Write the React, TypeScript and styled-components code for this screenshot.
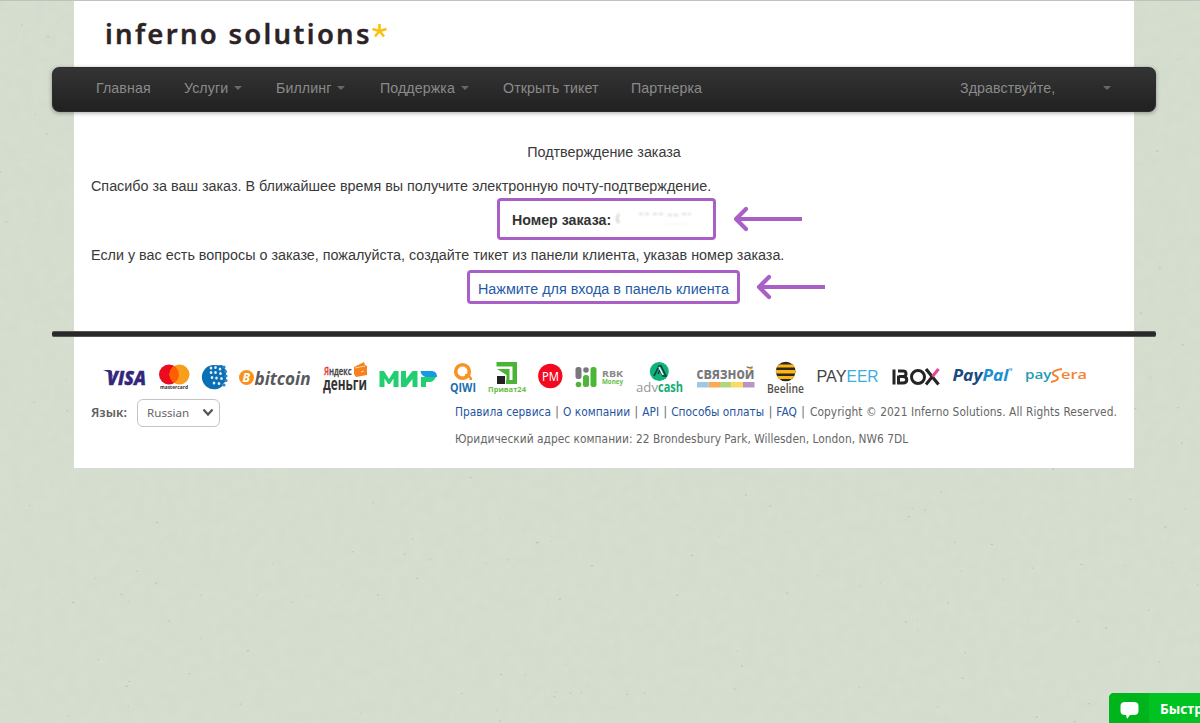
import React from 'react';
import styled, { createGlobalStyle } from 'styled-components';

const Global = createGlobalStyle`
  * { box-sizing: border-box; }
  html, body { margin: 0; height: 100%; overflow: hidden; }
  body { background: #d6ded0; font-family: 'Liberation Sans', Arial, sans-serif; color: #3a3a3a; }
`;

const Screen = styled.div`
  position: relative;
  height: 723px;
  overflow: hidden;
  border-top: 1px solid #bfc2be;
`;

const Texture = styled.svg`
  position: absolute;
  inset: 0;
  width: 1200px;
  height: 723px;
`;

const Page = styled.div`
  position: relative;
  width: 1060px;
  height: 467px;
  margin-left: 74px;
  background: #fff;
  display: flex;
  flex-direction: column;
`;

const Header = styled.header`
  height: 66px;
  padding-left: 30px;
`;

const Navbar = styled.nav`
  height: 45px;
  margin: 0 -22px;
  padding: 0 44px 3px 43px;
  display: flex;
  align-items: center;
  border-radius: 7px;
  border: 1px solid #2c2c2c;
  background: linear-gradient(#343434, #212121);
  box-shadow: 0 1px 4px rgba(0, 0, 0, 0.35);
  color: #8a8a8a;
`;

const NavItem = styled.a<{ $w: number }>`
  display: flex;
  align-items: center;
  flex: none;
  width: ${p => p.$w}px;
  font-size: 14.2px;
  letter-spacing: 0.1px;
  white-space: nowrap;
`;

const Greeting = styled(NavItem)`
  margin-left: auto;
  justify-content: space-between;
`;

const Caret = styled.i`
  margin-left: 6px;
  border: 4px solid transparent;
  border-top-color: #686868;
  border-bottom: 0;
`;

const Content = styled.main`
  height: 218px;
  padding: 23px 17px 0;
  font-size: 14.35px;
  line-height: 34.2px;
`;

const Line = styled.p<{ $center?: boolean }>`
  margin: 0;
  height: 34.2px;
  display: flex;
  justify-content: ${p => (p.$center ? 'center' : 'flex-start')};
  white-space: nowrap;
`;

const Marked = styled.div<{ $w: number; $h: number; $left: number; $pad: number }>`
  flex: none;
  width: ${p => p.$w}px;
  height: ${p => p.$h}px;
  margin-left: ${p => p.$left}px;
  padding-left: ${p => p.$pad}px;
  border: 3px solid #a95fc5;
  border-radius: 4px;
  display: flex;
  align-items: center;
`;

const MarkRow = styled.div<{ $gap: number; $shift: number }>`
  height: 34.2px;
  display: flex;
  align-items: center;
  gap: ${p => p.$gap}px;

  & > * { margin-top: ${p => p.$shift}px; }
`;

const PanelLink = styled.a`
  padding-top: 4px;
  color: #1f5aa6;
  white-space: nowrap;
`;

const OrderLabel = styled.b`
  padding-top: 2px;
  font-size: 14.2px;
  color: #333;
  white-space: nowrap;
`;

const Smudge = styled.svg`
  filter: blur(1px);
`;

const Arrow = styled.svg`
  flex: none;
`;

const Divider = styled.div`
  height: 6px;
  flex: none;
  margin: 1px -22px 0;
  background: #292929;
  border: solid #555;
  border-width: 1px 0;
  border-radius: 2px;
`;

const Payments = styled.div`
  display: flex;
  margin: 20px 0 0 26px;
  height: 40px;
`;

const Logo = styled.svg<{ $gap: number }>`
  flex: none;
  overflow: visible;
  margin-left: ${p => p.$gap}px;
`;

const Footer = styled.footer`
  display: flex;
  padding-left: 17px;
  color: #666;
  font-family: 'DejaVu Sans Condensed', 'DejaVu Sans', sans-serif;
  font-stretch: condensed;
  font-size: 11.8px;
`;

const Language = styled.div`
  width: 364px;
  display: flex;
  align-items: center;
  height: 27px;
  margin-top: 2px;
  gap: 9px;
`;

const LangLabel = styled.b`
  width: 37px;
  font-family: 'Noto Sans', sans-serif;
  font-size: 12.6px;
  font-weight: 600;
  color: #606060;
`;

const Select = styled.div`
  width: 83px;
  height: 28px;
  padding: 0 5px 0 9px;
  border: 1px solid #c4c4c4;
  border-radius: 6px;
  display: flex;
  align-items: center;
  justify-content: space-between;
  font-family: 'Noto Sans', sans-serif;
  font-size: 11.6px;
`;

const Legal = styled.div`
  line-height: 26.6px;
  white-space: nowrap;
  margin-top: 2px;
`;

const LegalRow = styled.div`
  letter-spacing: 0.04px;
`;

const LegalLink = styled.a`
  margin-right: 1px;
  letter-spacing: 0.02px;
  color: #1f55a0;

  &:not(:first-child) { margin-left: 0.7px; }
`;

const Copyright = styled.span`
  margin-left: 1.6px;
  letter-spacing: 0.09px;
`;

const Chat = styled.div`
  position: absolute;
  right: 0;
  bottom: 0;
  width: 91px;
  height: 30px;
  display: flex;
  overflow: hidden;
  border-radius: 5px 0 0 0;
  background: #00c322;
  color: #fff;
  font: bold 13.5px/32px 'Noto Sans', sans-serif;
  white-space: nowrap;
`;

const ChatIcon = styled.div`
  flex: none;
  width: 40px;
  margin-right: 11px;
  padding: 9px 0 0 11px;
  background: #00b41c;
  line-height: 0;
`;

const specks: [number, number, number][] = [];
let seed = 17;
const rnd = () => (seed = (seed * 16807) % 2147483647) / 2147483647;
for (let i = 0; i < 330; i++) specks.push([rnd() * 1200, rnd() * 723, rnd()]);

type LogoTextProps = {
  x: number; y: number; w: number; size: number; fill: string; children: React.ReactNode;
  weight?: number; italic?: boolean; font?: string; spaced?: boolean; bolder?: number;
};
const T = ({ x, y, w, size, fill, children, weight = 700, italic, font = 'Open Sans', spaced, bolder = 0 }: LogoTextProps) => (
  <text x={x} y={y} textLength={w} lengthAdjust={spaced ? 'spacing' : 'spacingAndGlyphs'} fontSize={size} fill={fill}
    stroke={bolder ? fill : 'none'} strokeWidth={bolder}
    fontWeight={weight} fontStyle={italic ? 'italic' : 'normal'} fontFamily={`'${font}', sans-serif`}>{children}</text>
);

const logos: { x: number; w: number; art: React.ReactNode }[] = [
  { x: 103, w: 43, art: <><T x={107} y={384.500} w={39} size={19.500} fill="#34267c" weight={800} italic bolder={0.4}>VISA</T><path d="M103 370h7.500l3 8c-2-4-5-6-10.500-8z" fill="#34267c" /></> },
  { x: 159, w: 31, art: <><circle cx="169" cy="374.500" r="10" fill="#eb0a1e" /><circle cx="179.500" cy="374.500" r="10" fill="#f99d1c" /><path d="M174.250 366a10 10 0 0 1 0 17a10 10 0 0 1 0-17z" fill="#ff5f00" /><T x={160} y={389} w={28} size={5.500} fill="#333">mastercard</T></> },
  { x: 202, w: 25, art: <><path d="M220 366.500a12.200 12.200 0 1 0 3 19l-2-3 1-12z" fill="#0b6fb5" /><path d="M211 366l11-1 4 5v11l-5 5-8-2-3-7z" fill="#0b6fb5" />
    {[[211, 368], [215.500, 367.500], [220, 369], [211, 372.500], [215.500, 372.500], [220.500, 373.500], [212, 377.500], [216.500, 378], [221.500, 378.500], [214, 383], [219, 383.500]].map(([a, b], i) => <ellipse key={i} cx={a} cy={b} rx="1.300" ry="1.500" fill="#e4f0f8" />)}
    {[[224, 367], [225.500, 371.500], [226, 376], [226, 380.500], [224, 385]].map(([a, b]) => <circle key={b} cx={a} cy={b} r="1.600" fill="#2f86c3" />)}</> },
  { x: 239, w: 72, art: <><circle cx="246.500" cy="377.500" r="7.500" fill="#f7931a" /><T x={242.500} y={382} w={7.500} size={12} fill="#fff" italic>B</T><T x={254.500} y={384.500} w={56} size={18.500} fill="#58595b" italic>bitcoin</T></> },
  { x: 323, w: 45, art: <><T x={324} y={375} w={27.500} size={10.500} fill="#444" weight={600} bolder={0.3}><tspan fill="#e33" stroke="#e33">Я</tspan>ндекс</T><T x={323} y={390} w={44} size={17.500} fill="#333">деньги</T><path d="M354 367l10-5 1 3 2 1v9l-11 2-2-3z" fill="#f58220" /><path d="M355 368l10-2M361 372l3-1" stroke="#ffd0a0" strokeWidth="1" /></> },
  { x: 379, w: 58, art: <><path d="M379.500 387v-16h4.500l5 8 5-8h4.500v16h-5v-8.500l-3.500 5.500h-2l-3.500-5.500V387zM401 387v-16h5v8l6.500-8h5v16h-5v-8l-6.500 8zM421 387v-10h15c-2 4-4 5-7 5h-3v5z" fill="#22cf70" /><path d="M420.500 371h10.500c4 0 6 2 6 6h-10c-3 0-6-2-6.500-6z" fill="#149be4" /></> },
  { x: 450, w: 26, art: <><circle cx="462.500" cy="371.500" r="6.800" fill="none" stroke="#f79320" strokeWidth="3.600" /><path d="M465 375q6 1 6 5" fill="none" stroke="#f79320" strokeWidth="2.500" /><T x={450} y={392} w={26} size={12} fill="#1b6fb1">QIWI</T></> },
  { x: 488, w: 38, art: <><path d="M496.500 362h20.500v22h-11v-4h6.500v-13.500h-16z" fill="#4bb436" /><path d="M497 369h12.500v11h-3v-5z" fill="#4bb436" /><path d="M497 376h8v8h-8z" fill="#222" /><T x={488} y={392} w={38} size={7.500} fill="#67bd45">Приват24</T></> },
  { x: 538, w: 25, art: <><circle cx="550.300" cy="376" r="12.200" fill="#f20a20" /><T x={542} y={380.500} w={17} size={12} fill="#fff" weight={400} font="Noto Sans">PM</T></> },
  { x: 575, w: 49, art: <><rect x="575.500" y="367" width="6" height="12" rx="2.500" fill="#77787b" /><circle cx="578.500" cy="384.500" r="2.800" fill="#4fb53a" /><circle cx="586" cy="370" r="2.800" fill="#77787b" /><rect x="583" y="375" width="6" height="12" rx="2.500" fill="#4fb53a" /><rect x="590.500" y="367" width="6" height="20" rx="2.500" fill="#4fb53a" /><T x={602} y={376.500} w={21} size={8.500} fill="#888">RBK</T><T x={602} y={384} w={21} size={7} fill="#65c043">Money</T></> },
  { x: 636, w: 48, art: <><circle cx="659.300" cy="371.500" r="9.500" fill="#0fb277" /><path d="M654 376l5-10h2l5 10h-3l-3-6-2 4" fill="none" stroke="#103c45" strokeWidth="1.600" /><path d="M659 367l4 8" stroke="#fff" strokeWidth="1.500" /><T x={636} y={392} w={22} size={13.500} fill="#999" weight={400}>adv</T><T x={658} y={392} w={25} size={13.500} fill="#12ad73">cash</T></> },
  { x: 696, w: 59, art: <><T x={696.500} y={379} w={58} size={15.500} fill="#77777a">связной</T>{['#9cc9e8', '#f9aa5f', '#b5d57c', '#fbda62', '#b994c7'].map((c, i) => <rect key={c} x={697 + i * 11.500} y="382" width="11.500" height="5.500" fill={c} />)}<path d="M749.500 369l3-1" stroke="#f90" strokeWidth="1.500" /></> },
  { x: 767, w: 38, art: <><clipPath id="bee"><circle cx="785.700" cy="371.500" r="9.800" /></clipPath><g clipPath="url(#bee)"><path d="M775 361h22v22h-22z" fill="#302820" /><path d="M775 364.500h22v3h-22zM775 370h22v3.500h-22zM775 376h22v3h-22z" fill="#fdb515" /></g><T x={767} y={393} w={37} size={12} fill="#55504b" weight={600}>Beeline</T></> },
  { x: 817, w: 62, art: <><T x={816.500} y={382} w={30} size={16} fill="#454545" weight={400} font="Liberation Sans">PAY</T><T x={846.500} y={382} w={32} size={16} fill="#3baee0" weight={400} font="Liberation Sans">EER</T></> },
  { x: 892, w: 49, art: <><path d="M894 369.500v15M898 371h5c4 0 4 5.500 0 5.500h-4h4c5 0 5 6.500 0 6.500h-4.500v-7.500" fill="none" stroke="#252525" strokeWidth="3" /><circle cx="918" cy="377" r="6.500" fill="none" stroke="#252525" strokeWidth="3" /><path d="M926 369l12.500 15.500" stroke="#252525" strokeWidth="3.200" /><path d="M938.500 369l-6 7.500" stroke="#e6459a" strokeWidth="3" /><path d="M932 377l-6 7.500" stroke="#252525" strokeWidth="3" /></> },
  { x: 953, w: 60, art: <><T x={952.500} y={381} w={30} size={16.500} fill="#164a80" weight={700} italic>Pay</T><T x={982.500} y={381} w={26} size={16.500} fill="#1c8fd0" weight={700} italic>Pal</T><T x={1009} y={371} w={3} size={3} fill="#1c8fd0">TM</T></> },
  { x: 1025, w: 62, art: <><T x={1025} y={379} w={26.500} size={13} fill="#249cb5" weight={600}>pay</T><path d="M1062 369c-7 1-10 3-9 5s5 2 5 4-2 3-7 4" fill="none" stroke="#f58232" strokeWidth="2" /><T x={1061} y={379} w={26} size={13} fill="#f58232" weight={600}>era</T></> },
];

const LeftArrow = () => (
  <Arrow width="70" height="26" viewBox="0 0 70 26" fill="none" stroke="#a95fc5">
    <path d="M69 13H3" strokeWidth="3.800" />
    <path d="M13 3L3 13l10 10" strokeWidth="4.200" strokeLinecap="round" strokeLinejoin="round" />
  </Arrow>
);

export default function App() {
  return (
    <Screen>
      <Global />
      <Texture>
        <filter id="paper" x="0" y="0" width="100%" height="100%">
          <feTurbulence type="fractalNoise" baseFrequency="0.09" numOctaves="3" seed="4" />
          <feColorMatrix values="0 0 0 0 0.55  0 0 0 0 0.6  0 0 0 0 0.53  0.25 0 0 0 -0.08" />
        </filter>
        <rect width="1200" height="723" filter="url(#paper)" />
        {specks.map(([x, y, s], i) => (
          <ellipse key={i} cx={x} cy={y} rx={0.5 + s * 0.9} ry={0.5 + (1 - s) * 0.6} fill="#98a591" opacity={0.12 + s * 0.4} />
        ))}
      </Texture>
      <Page>
        <Header>
          <svg width="290" height="64" viewBox="104 1 290 64">
            <T x={105} y={44} w={264.500} size={27.500} fill="#2b2325" weight={600} font="Noto Sans" spaced bolder={0.35}>inferno solutions</T>
            <path d="M379.500 31v-7M379.500 31l-7-2M379.500 31l7-2M379.500 31l-4.500 5.500M379.500 31l4.500 5.500" stroke="#fdc010" strokeWidth="2.600" />
          </svg>
        </Header>
        <Navbar>
          <NavItem $w={88}>Главная</NavItem>
          <NavItem $w={92}>Услуги<Caret /></NavItem>
          <NavItem $w={104}>Биллинг<Caret /></NavItem>
          <NavItem $w={123}>Поддержка<Caret /></NavItem>
          <NavItem $w={128}>Открыть тикет</NavItem>
          <NavItem $w={75}>Партнерка</NavItem>
          <Greeting $w={151}>Здравствуйте,<Caret /></Greeting>
        </Navbar>
        <Content>
          <Line $center>Подтверждение заказа</Line>
          <Line>Спасибо за ваш заказ. В ближайшее время вы получите электронную почту-подтверждение.</Line>
          <MarkRow $gap={17} $shift={-2}>
            <Marked $w={219} $h={42} $left={406} $pad={12}>
              <OrderLabel>Номер заказа:</OrderLabel>
              <Smudge width="88" height="24" viewBox="0 0 88 24" fill="none" stroke="#999">
                <path d="M8 7q-4 5 0 9" opacity=".5" strokeWidth="2" />
                <path d="M28 7h10M42 7h12M57 8h11M71 7h9" opacity=".35" strokeWidth="2" strokeDasharray="4 2" />
                <path d="M55 17h20" opacity=".12" />
              </Smudge>
            </Marked>
            <LeftArrow />
          </MarkRow>
          <Line>Если у вас есть вопросы о заказе, пожалуйста, создайте тикет из панели клиента, указав номер заказа.</Line>
          <MarkRow $gap={16} $shift={-3}>
            <Marked $w={273} $h={34} $left={376} $pad={8}>
              <PanelLink>Нажмите для входа в панель клиента</PanelLink>
            </Marked>
            <LeftArrow />
          </MarkRow>
        </Content>
        <Divider />
        <Payments>
          {logos.map((l, i) => (
            <Logo key={l.x} $gap={l.x - (i ? logos[i - 1].x + logos[i - 1].w : 100)} width={l.w} height="40" viewBox={`${l.x} 357 ${l.w} 40`}>{l.art}</Logo>
          ))}
        </Payments>
        <Footer>
          <Language>
            <LangLabel>Язык:</LangLabel>
            <Select>Russian
              <svg width="12" height="9" viewBox="0 0 12 9"><path d="M1.500 1.500L6 6.500l4.500-5" fill="none" stroke="#555" strokeWidth="2.200" /></svg>
            </Select>
          </Language>
          <Legal>
            <LegalRow>
              <LegalLink>Правила сервиса</LegalLink> | <LegalLink>О компании</LegalLink> | <LegalLink>API</LegalLink> | <LegalLink>Способы оплаты</LegalLink> | <LegalLink>FAQ</LegalLink> | <Copyright>Copyright © 2021 Inferno Solutions. All Rights Reserved.</Copyright>
            </LegalRow>
            <LegalRow>Юридический адрес компании: 22 Brondesbury Park, Willesden, London, NW6 7DL</LegalRow>
          </Legal>
        </Footer>
      </Page>
      <Chat>
        <ChatIcon>
          <svg width="19" height="18" viewBox="0 0 19 18"><path d="M5 0h9q4.500 0 4.500 4v5q0 4-4.500 4H10l-3 4-1-4H5Q.5 13 .5 9V4Q.5 0 5 0z" fill="#fff" /></svg>
        </ChatIcon>
        Быстрая помощь
      </Chat>
    </Screen>
  );
}
